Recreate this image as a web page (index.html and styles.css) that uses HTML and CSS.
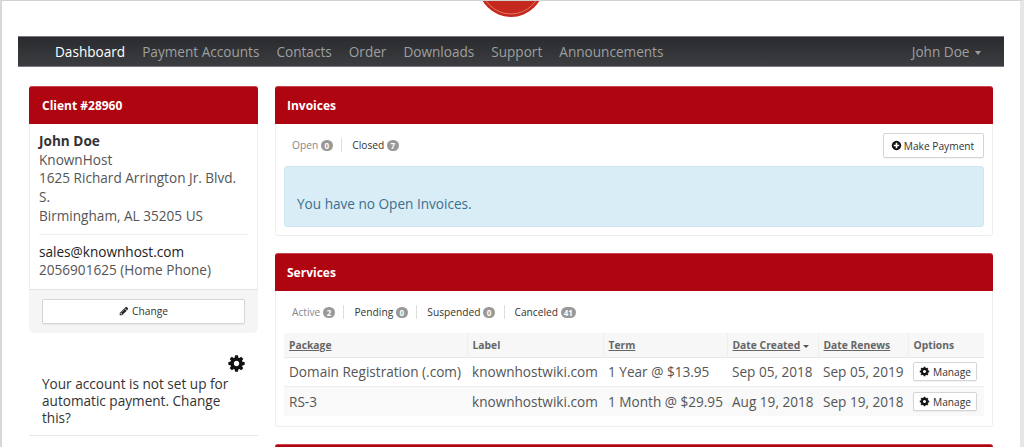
FILE: index.html
```html
<!DOCTYPE html>
<html lang="en">
<head>
<meta charset="utf-8">
<title>Dashboard</title>
<link rel="stylesheet" href="styles.css">
</head>
<body>
<svg class="defs" width="0" height="0" aria-hidden="true">
  <symbol id="gear" viewBox="0 0 1792 1792"><path d="M1152 896q0-106-75-181t-181-75-181 75-75 181 75 181 181 75 181-75 75-181zm512-109v222q0 12-8 23t-20 13l-185 28q-19 54-39 91 35 50 107 138 10 12 10 25t-9 23q-27 37-99 108t-94 71q-12 0-26-9l-138-108q-44 23-91 38-16 136-29 186-7 28-36 28h-222q-14 0-24.5-8.5t-11.5-21.5l-28-184q-49-16-90-37l-141 107q-10 9-25 9-14 0-25-11-126-114-165-168-7-10-7-23 0-12 8-23 15-21 51-66.5t54-70.5q-27-50-41-99l-183-27q-13-2-21-12.5t-8-23.5v-222q0-12 8-23t19-13l186-28q14-46 39-92-40-57-107-138-10-12-10-24 0-10 9-23 26-36 98.5-107.5t94.5-71.5q13 0 26 10l138 107q44-23 91-38 16-136 29-186 7-28 36-28h222q14 0 24.5 8.5t11.5 21.5l28 184q49 16 90 37l142-107q9-9 24-9 13 0 25 10 129 119 165 170 7 8 7 22 0 12-8 23-15 21-51 66.5t-54 70.5q26 50 41 98l183 28q13 2 21 12.5t8 23.5z"/></symbol>
</svg>
<div class="frame">
  <header class="brand">
    <svg class="logo" viewBox="0 0 68 16" aria-hidden="true">
      <circle cx="34" cy="-17" r="33" fill="#c5281c"/>
      <circle cx="34" cy="-17" r="30" fill="none" stroke="#e88a7c" stroke-width="0.8"/>
    </svg>
  </header>
  <nav class="navbar">
    <ul class="nav-links">
      <li class="active">Dashboard</li>
      <li>Payment Accounts</li>
      <li>Contacts</li>
      <li>Order</li>
      <li>Downloads</li>
      <li>Support</li>
      <li>Announcements</li>
    </ul>
    <div class="nav-user">John Doe <span class="caret"></span></div>
  </nav>
  <div class="columns">
    <aside class="sidebar">
      <section class="panel client">
        <h2 class="panel-head">Client #28960</h2>
        <div class="client-body">
          <strong class="client-name">John Doe</strong>
          <div>KnownHost</div>
          <div>1625 Richard Arrington Jr. Blvd. S.</div>
          <div>Birmingham, AL 35205 US</div>
          <hr class="rule">
          <div class="dark">sales@knownhost.com</div>
          <div>2056901625 (Home Phone)</div>
        </div>
        <div class="client-foot">
          <button class="btn btn-wide">
            <svg class="ico" viewBox="0 0 1792 1792" aria-hidden="true"><path d="M491 1536l91-91-235-235-91 91v107h128v128h107zm523-928q0-22-22-22-10 0-17 7l-542 542q-7 7-7 17 0 22 22 22 10 0 17-7l542-542q7-7 7-17zm-54-192l416 416-832 832h-416v-416zm683 96q0 53-37 90l-166 166-416-416 166-165q36-38 90-38 53 0 91 38l235 234q37 39 37 91z"/></svg>
            Change
          </button>
        </div>
      </section>
      <section class="autopay">
        <svg class="autopay-gear" aria-hidden="true"><use href="#gear"/></svg>
        <p class="autopay-text">Your account is not set up for automatic payment. Change this?</p>
      </section>
    </aside>
    <main class="content">
      <section class="panel invoices">
        <h2 class="panel-head">Invoices</h2>
        <div class="panel-body">
          <div class="toolbar">
            <ul class="tabs">
              <li class="current">Open <span class="badge">0</span></li>
              <li>Closed <span class="badge">7</span></li>
            </ul>
            <button class="btn btn-pay">
              <svg class="ico ico-plus" viewBox="0 0 1792 1792" aria-hidden="true"><path d="M1344 960v-128q0-26-19-45t-45-19h-256v-256q0-26-19-45t-45-19h-128q-26 0-45 19t-19 45v256h-256q-26 0-45 19t-19 45v128q0 26 19 45t45 19h256v256q0 26 19 45t45 19h128q26 0 45-19t19-45v-256h256q26 0 45-19t19-45zm320-64q0 209-103 385.5t-279.5 279.5-385.5 103-385.5-103-279.5-279.5-103-385.5 103-385.5 279.5-279.5 385.5-103 385.5 103 279.5 279.5 103 385.5z"/></svg>
              Make Payment
            </button>
          </div>
          <div class="alert">You have no Open Invoices.</div>
        </div>
      </section>
      <section class="panel services">
        <h2 class="panel-head">Services</h2>
        <div class="panel-body">
          <ul class="tabs services-tabs">
            <li class="current">Active <span class="badge">2</span></li>
            <li>Pending <span class="badge">0</span></li>
            <li>Suspended <span class="badge">0</span></li>
            <li>Canceled <span class="badge">41</span></li>
          </ul>
          <table class="grid">
            <colgroup>
              <col class="c-package"><col class="c-label"><col class="c-term"><col class="c-created"><col class="c-renews"><col class="c-options">
            </colgroup>
            <thead>
              <tr>
                <th><a>Package</a></th>
                <th>Label</th>
                <th><a>Term</a></th>
                <th><a>Date Created</a> <span class="caret caret-sm"></span></th>
                <th><a>Date Renews</a></th>
                <th>Options</th>
              </tr>
            </thead>
            <tbody>
              <tr>
                <td>Domain Registration (.com)</td>
                <td>knownhostwiki.com</td>
                <td>1 Year @ $13.95</td>
                <td>Sep 05, 2018</td>
                <td>Sep 05, 2019</td>
                <td><button class="btn btn-sm"><svg class="ico ico-gear" aria-hidden="true"><use href="#gear"/></svg> Manage</button></td>
              </tr>
              <tr>
                <td>RS-3</td>
                <td>knownhostwiki.com</td>
                <td>1 Month @ $29.95</td>
                <td>Aug 19, 2018</td>
                <td>Sep 19, 2018</td>
                <td><button class="btn btn-sm"><svg class="ico ico-gear" aria-hidden="true"><use href="#gear"/></svg> Manage</button></td>
              </tr>
            </tbody>
          </table>
        </div>
      </section>
      <section class="panel next"><div class="panel-head"></div></section>
    </main>
  </div>
</div>
</body>
</html>
```
FILE: styles.css
```css
* { box-sizing: border-box; }
html, body { margin: 0; height: 100%; overflow: hidden; background: #fff; }
body { font-family: "Open Sans", "Noto Sans", sans-serif; font-size: 13.6px; color: #555; }
.defs { display: block; height: 0; }
.frame {
  height: 447px; width: 1024px; overflow: hidden;
  border-top: 1px solid #d2d2d2; border-left: 2px solid #d8d8d8; border-right: 4px solid #e6e6e6;
  background: #fff;
}
.brand { height: 35px; display: flex; justify-content: center; align-items: flex-start; }
.logo { width: 68px; height: 16px; display: block; }
.navbar {
  margin: 0 16px; height: 31px; display: flex; justify-content: space-between; align-items: center;
  background: linear-gradient(#292b2e, #3b3d40);
  border-top: 1px solid #77797c; border-bottom: 1px solid #77797c;
  padding: 0 23px 0 37px; color: #9f9f9f;
}
.nav-links { list-style: none; margin: 0; padding: 0; display: flex; gap: 17px; }
.nav-links .active { color: #fff; }
.nav-user { white-space: nowrap; }
.caret {
  display: inline-block; width: 0; height: 0; margin-left: 2px; vertical-align: middle;
  border-top: 4px solid #9f9f9f; border-left: 3.5px solid transparent; border-right: 3.5px solid transparent;
}
.columns { display: flex; gap: 17px; padding: 19px 0 0 27px; align-items: flex-start; }
.sidebar { width: 229px; flex: none; }
.content { width: 718px; flex: none; display: flex; flex-direction: column; gap: 17px; }
.panel { background: #fff; border-radius: 3px; }
.panel-head {
  margin: 0; height: 38px; line-height: 37px; padding: 0 13px; background: #af0510; color: #fff;
  font-size: 12px; font-weight: 700; border-radius: 3px 3px 0 0; border-top: 1px solid #c9444c;
}
.content .panel-head { padding: 0 12px; }
.client-body { border-left: 1px solid #eee; border-right: 1px solid #eee; padding: 8px 9px 9px; line-height: 18.7px; color: #555; }
.client-name { display: block; color: #333; }
.rule { border: 0; border-top: 1px solid #eee; margin: 8px 0 8px; }
.dark { color: #222; }
.client-foot { background: #f5f5f5; border-top: 1px solid #e4e4e4; padding: 9px 13px 9px; border-radius: 0 0 5px 5px; }
.btn {
  font: inherit; font-size: 10.2px; color: #333; background: #fff; border: 1px solid #d5d5d5; border-radius: 2px;
  height: 25px; padding: 0 8px; display: inline-flex; align-items: center; justify-content: center; gap: 3px; white-space: nowrap;
  box-shadow: 0 1px 1px rgba(0,0,0,.05);
}
.btn-wide { width: 100%; }
.btn-pay { gap: 2px; padding: 0 9px 0 7px; width: 101px; }
.ico { width: 10px; height: 10px; fill: #222; flex: none; }
.ico-plus { width: 11px; height: 11px; fill: #111; }
.autopay { padding: 21px 13px 9px; border-bottom: 1px solid #e8e8e8; display: flex; flex-direction: column; }
.autopay-gear { width: 19px; height: 19px; fill: #111; align-self: flex-end; margin-right: -1px; }
.autopay-text { margin: 2.5px 0 0; line-height: 17px; color: #333; }
.panel-body { border: 1px solid #eee; border-top: 0; padding: 9px 8px 8px; border-radius: 0 0 3px 3px; }
.services .panel-body { padding-bottom: 10px; }
.toolbar { display: flex; justify-content: space-between; align-items: center; margin-bottom: 8px; }
.tabs { list-style: none; margin: 0 0 1px; padding: 0 8px; display: flex; font-size: 10.2px; color: #333; }
.tabs li + li { margin-left: 8.5px; padding-left: 10px; border-left: 1px solid #ddd; }
.tabs .current { color: #888; }
.badge {
  display: inline-block; min-width: 12px; height: 11px; padding: 0 3px; border-radius: 6px; background: #999; color: #fff;
  font-size: 8px; font-weight: 700; line-height: 11px; text-align: center; vertical-align: 0;
}
.alert {
  height: 61px; padding: 27px 12px 0; background: #d9edf7; border: 1px solid #cfe6f1; border-radius: 3px; color: #3b6f8f; line-height: 19px;
}
.services-tabs { height: 21px; align-items: center; margin: 1px 0 11px; }
.grid { width: 700px; table-layout: fixed; border-collapse: collapse; }
.c-package { width: 183px; }
.c-label { width: 136px; }
.c-term { width: 124px; }
.c-created { width: 91px; }
.c-renews { width: 90px; }
.c-options { width: 76px; }
.grid th {
  background: #f7f7f7; height: 24px; padding: 0 5px; font-size: 10.3px; font-weight: 700; color: #666; text-align: left;
  border-left: 1px solid #eee; border-bottom: 1px solid #e8e8e8; white-space: nowrap;
}
.grid th:first-child { border-left: 0; }
.grid th a { text-decoration: underline; }
.grid td { height: 29.5px; padding: 0 5px; white-space: nowrap; border-bottom: 1px solid #eee; color: #555; }
.grid tbody tr:nth-child(even) td { background: #f9f9f9; border-bottom: 0; }
.caret-sm { border-top-color: #555; border-top-width: 3.5px; margin-left: 0; }
.btn-sm { height: 19px; padding: 0 6px; gap: 3px; font-size: 10.2px; width: 64px; }
.ico-gear { width: 11px; height: 11px; fill: #111; }
.next .panel-head { height: 20px; }
```
